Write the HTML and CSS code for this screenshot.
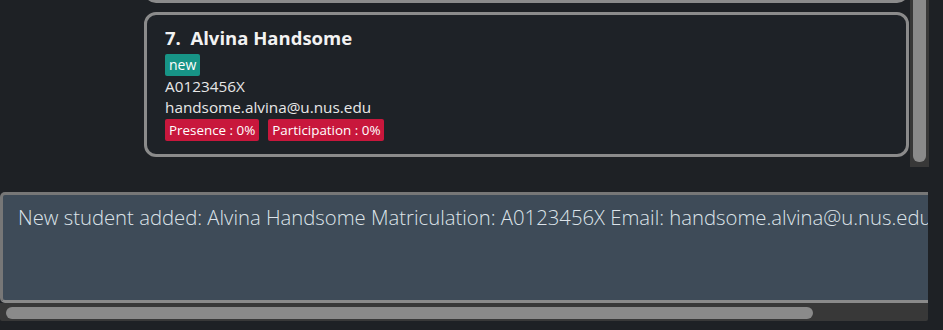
FILE: index.html
```html
<!DOCTYPE html>
<html lang="en">
<head>
    <meta charset="UTF-8">
    <meta name="viewport" content="width=device-width, initial-scale=1.0">
    <title>Student List</title>
    <link rel="stylesheet" href="styles.css">
</head>
<body>

    <!-- Student list -->
    <div class="list-pane">
        <div class="list">
            <div class="card card-prev"></div>
            <div class="card">
                <div class="card-title">7.&nbsp;&nbsp;Alvina Handsome</div>
                <div class="tags">
                    <span class="tag tag-new">new</span>
                </div>
                <div class="card-line">A0123456X</div>
                <div class="card-line">handsome.alvina@u.nus.edu</div>
                <div class="tags">
                    <span class="tag tag-stat">Presence : 0%</span>
                    <span class="tag tag-stat">Participation : 0%</span>
                </div>
            </div>
        </div>
        <div class="vscroll"><div class="vthumb"></div></div>
    </div>

    <!-- Command result -->
    <div class="result-pane">
        <div class="result-view">
            <div class="result-box">New student added: Alvina Handsome Matriculation: A0123456X Email: handsome.alvina@u.nus.edu</div>
        </div>
        <div class="hscroll"><div class="hthumb"></div></div>
    </div>

</body>
</html>
```

FILE: styles.css
```css
body {
    font-family: "Open Sans", "Noto Sans", sans-serif;
    margin: 0;
    padding: 0;
    background-color: #1e2125;
    color: #ffffff;
    height: 330px;
    overflow: hidden;
}

.list-pane {
    display: flex;
    width: 929px;
    height: 167px;
    overflow: hidden;
}

.list {
    flex-grow: 1;
    padding: 0 1px 0 144px;
}

.card {
    border: 3px solid #8b8b8b;
    border-radius: 12px;
    background-color: #1e2227;
    padding: 10px 15px 13px 18px;
}

/* bottom of the card above, scrolled mostly out of view */
.card-prev {
    height: 20px;
    padding: 0;
    margin-top: -23px;
    margin-bottom: 9px;
}

.card-title {
    font-size: 18.5px;
    font-weight: bold;
    line-height: 26px;
    color: #f2f2f2;
    margin-bottom: 3px;
}

.tags {
    display: flex;
    gap: 9px;
}

.tag {
    display: inline-block;
    height: 22px;
    line-height: 22px;
    padding: 0 4px;
    border-radius: 2px;
    font-size: 13.4px;
    color: #ffffff;
}

.tag-new {
    background-color: #179486;
    font-size: 14px;
}

.tag-stat {
    background-color: #c8173c;
}

.card-line {
    font-size: 15.3px;
    line-height: 21px;
    color: #e8e8e8;
}

.card-line:first-of-type {
    margin-top: 2px;
}

.tags:last-child {
    margin-top: 1px;
}

.vscroll {
    width: 19px;
    background-color: #383838;
    padding: 0 3px 5px 3px;
    box-sizing: border-box;
}

.vthumb {
    height: 100%;
    background-color: #8a8a8a;
    border-radius: 0 0 6px 6px;
}

.result-pane {
    width: 928px;
    margin-top: 25px;
}

.result-view {
    overflow: hidden;
}

.result-box {
    width: 1100px;
    height: 96px;
    border: 3px solid #777777;
    border-bottom-color: #8a8a8a;
    border-radius: 5px 0 0 5px;
    background-color: #3e4b58;
    padding: 9px 0 0 15px;
    font-size: 20.3px;
    font-weight: 300;
    line-height: 26px;
    color: #dde4ea;
    white-space: nowrap;
}

.hscroll {
    height: 18px;
    background-color: #383838;
    padding: 4px 0 2px 6px;
    box-sizing: border-box;
    border-radius: 0 0 2px 2px;
}

.hthumb {
    width: 807px;
    height: 12px;
    background-color: #8a8a8a;
    border-radius: 6px;
}
```
